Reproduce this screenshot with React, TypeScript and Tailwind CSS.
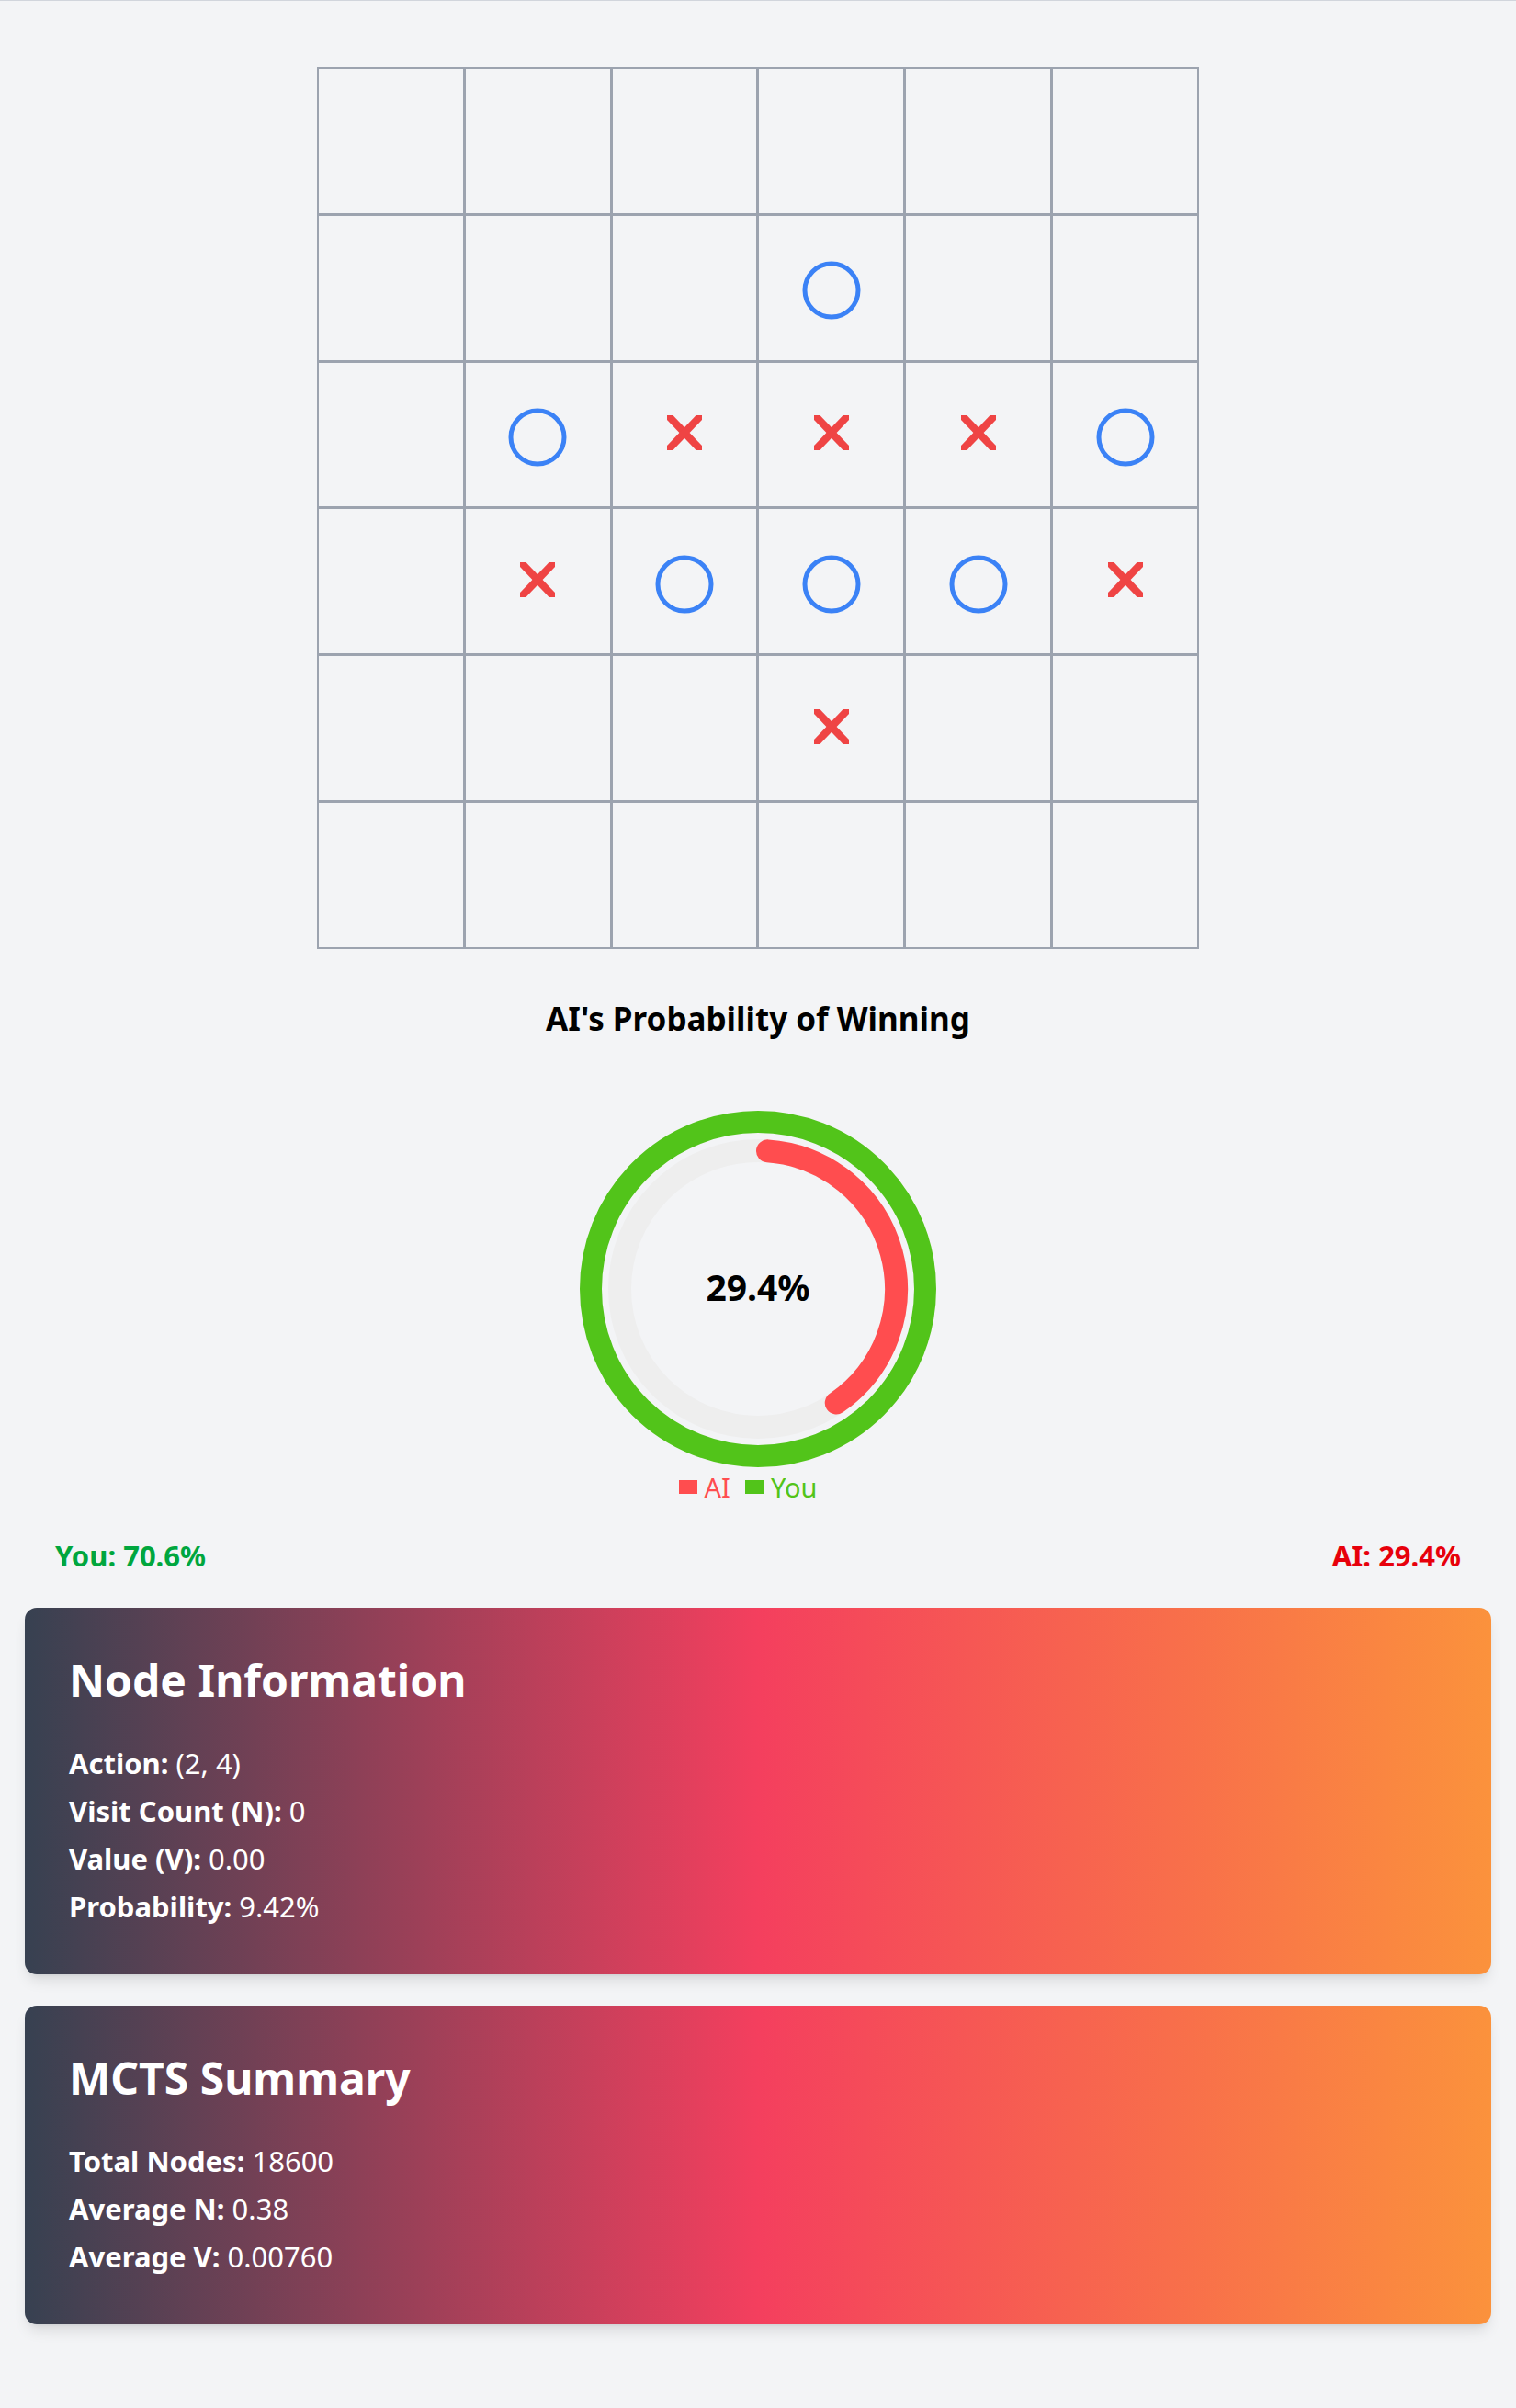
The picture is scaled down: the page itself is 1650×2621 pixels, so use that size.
import React from "react";

type Cell = "" | "X" | "O";

const board: Cell[][] = [
  ["", "", "", "", "", ""],
  ["", "", "", "O", "", ""],
  ["", "O", "X", "X", "X", "O"],
  ["", "X", "O", "O", "O", "X"],
  ["", "", "", "X", "", ""],
  ["", "", "", "", "", ""],
];

const Mark = ({ value }: { value: Cell }) => {
  if (value === "O") {
    return (
      <svg width="64" height="64" viewBox="0 0 64 64" className="mt-[6px]">
        <circle cx="32" cy="32" r="29" fill="none" stroke="#3b82f6" strokeWidth="5" />
      </svg>
    );
  }
  if (value === "X") {
    return (
      <svg width="38" height="38" viewBox="0 0 38 38" className="-mt-[4px]">
        <line x1="-2" y1="-3" x2="40" y2="41" stroke="#ef4444" strokeWidth="8" />
        <line x1="40" y1="-3" x2="-2" y2="41" stroke="#ef4444" strokeWidth="8" />
      </svg>
    );
  }
  return null;
};

// 29.4% arc, drawn from the top going clockwise
const WinDonut = () => {
  const cx = 210;
  const cy = 210;
  const r = 150.5;
  const pt = (deg: number) => {
    const a = (deg * Math.PI) / 180;
    return [cx + r * Math.sin(a), cy - r * Math.cos(a)];
  };
  const [sx, sy] = pt(4);
  const [ex, ey] = pt(145.5);
  return (
    <svg width="420" height="406" viewBox="0 0 420 406" className="mx-auto block">
      <circle cx={cx} cy={cy} r="182" fill="none" stroke="#52c41a" strokeWidth="24" />
      <circle cx={cx} cy={cy} r={r} fill="none" stroke="#eeeeee" strokeWidth="25" />
      <path
        d={`M ${sx} ${sy} A ${r} ${r} 0 0 1 ${ex} ${ey}`}
        fill="none"
        stroke="#ff4d4f"
        strokeWidth="25"
        strokeLinecap="round"
      />
      <text x={cx} y="223" textAnchor="middle" fontSize="39" fontWeight="700" fill="#000">
        29.4%
      </text>
    </svg>
  );
};

const InfoCard = ({ title, rows }: { title: string; rows: [string, string][] }) => (
  <div className="rounded-[13px] bg-[linear-gradient(to_right,#374151,#f43f5e,#fb923c)] px-[48px] pb-[48px] pt-[50px] text-white shadow-[0_10px_15px_-3px_rgba(0,0,0,0.1),0_4px_6px_-4px_rgba(0,0,0,0.1)]">
    <h2 className="text-[48px] font-bold leading-[58px]">{title}</h2>
    <div className="mt-[35px]">
      {rows.map(([label, value]) => (
        <p key={label} className="text-[31px] leading-[52px]">
          <span className="font-bold">{label}:</span> {value}
        </p>
      ))}
    </div>
  </div>
);

export default function App() {
  return (
    <div className="min-h-[2621px] border-t border-gray-300 bg-gray-100 pb-[94px] font-['Noto_Sans',sans-serif]">
      {/* board */}
      <div className="mx-auto mt-[72px] grid w-[960px] grid-cols-6 gap-[3px] bg-[#9ca3af] p-[2px]">
        {board.map((row, r) =>
          row.map((cell, c) => (
            <div
              key={`${r}-${c}`}
              className="flex h-[156.83px] items-center justify-center bg-gray-100"
            >
              <Mark value={cell} />
            </div>
          )),
        )}
      </div>

      <h3 className="mt-[56px] text-center text-[35px] font-bold leading-[40px] text-black">
        AI's Probability of Winning
      </h3>

      <div className="mt-[64px]">
        <WinDonut />
      </div>

      {/* legend */}
      <div className="mt-[4px] flex items-center justify-center gap-[16px] pr-[22px] text-[29px] leading-[32px]">
        <div className="flex items-center gap-[8px] text-[#ff4d4f]">
          <span className="inline-block h-[15px] w-[20px] bg-[#ff4d4f]" />
          AI
        </div>
        <div className="flex items-center gap-[8px] text-[#52c41a]">
          <span className="inline-block h-[15px] w-[20px] bg-[#52c41a]" />
          You
        </div>
      </div>

      <div className="mt-[40px] flex justify-between px-[60px] text-[31px] font-bold leading-[36px]">
        <span className="text-green-600">You: 70.6%</span>
        <span className="text-red-600">AI: 29.4%</span>
      </div>

      <div className="mx-[27px] mt-[39px] flex flex-col gap-[34px]">
        <InfoCard
          title="Node Information"
          rows={[
            ["Action", "(2, 4)"],
            ["Visit Count (N)", "0"],
            ["Value (V)", "0.00"],
            ["Probability", "9.42%"],
          ]}
        />
        <InfoCard
          title="MCTS Summary"
          rows={[
            ["Total Nodes", "18600"],
            ["Average N", "0.38"],
            ["Average V", "0.00760"],
          ]}
        />
      </div>
    </div>
  );
}
